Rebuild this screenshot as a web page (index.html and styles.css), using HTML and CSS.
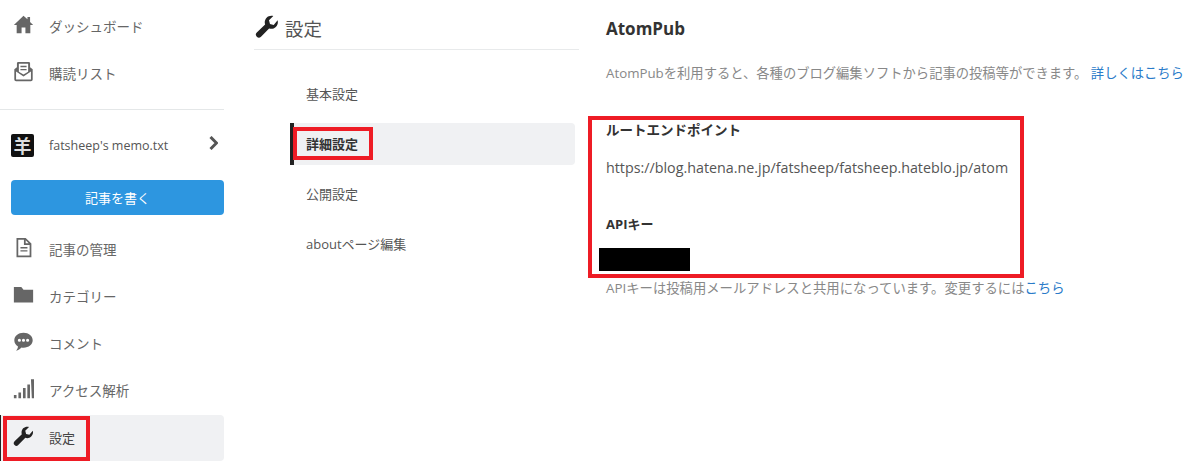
FILE: index.html
```html
<!DOCTYPE html>
<html lang="ja">
<head>
<meta charset="utf-8">
<title>AtomPub 詳細設定</title>
<link rel="stylesheet" href="styles.css">
</head>
<body>
<div class="page">
  <nav class="side">
    <a class="side-item"><svg class="ico" viewBox="0 0 24 24"><path d="M12 2 1 12.500h3.200V22h5.600v-6.500h4.400V22h5.600v-9.500H23L19.500 9V3.500h-3V6z"/></svg><span>ダッシュボード</span></a>
    <a class="side-item"><svg class="ico" viewBox="0 0 24 24"><path fill-rule="evenodd" d="M6 1h12a1.500 1.500 0 0 1 1.500 1.500V7l3 2.500V21a2 2 0 0 1-2 2H3.500a2 2 0 0 1-2-2V9.500l3-2.500V2.500A1.500 1.500 0 0 1 6 1zm.7 2v9.300L12 15.500l5.300-3.200V3zM3.500 12v9h17v-9L12 17.800zM8.500 5.500h7v1.700h-7zm0 3.500h7v1.700h-7z"/></svg><span>購読リスト</span></a>
    <hr class="side-rule">
    <a class="side-item blog"><span class="avatar">羊</span><span class="blog-name">fatsheep's memo.txt</span><svg class="chev" viewBox="0 0 10 14"><path d="M2.500 1 8.500 7l-6 6" fill="none" stroke="currentColor" stroke-width="3"/></svg></a>
    <button class="write">記事を書く</button>
    <a class="side-item"><svg class="ico" viewBox="0 0 24 24"><path fill-rule="evenodd" d="M4 1h10.500L21 7.500V23H4zm2 2v18h13V9h-6.500V3zm8.500.8V7.200h3.400zM8.500 11.500h8v1.600h-8zm0 3.500h8v1.600h-8z"/></svg><span>記事の管理</span></a>
    <a class="side-item"><svg class="ico" viewBox="0 0 24 24"><path d="M1 3.500h8.500L12 6.500h11V21H1z"/></svg><span>カテゴリー</span></a>
    <a class="side-item"><svg class="ico" viewBox="0 0 24 24"><path fill-rule="evenodd" d="M12 2c6 0 10.500 3.700 10.500 8.500S18 19 12 19c-.8 0-1.500 0-2.300-.2C8.200 20.500 6 22 3.500 22.500c1.300-1.500 2-3 2.200-4.800C3 16.100 1.500 13.500 1.500 10.500 1.500 5.700 6 2 12 2zM7.300 8.800a1.800 1.800 0 1 0 0 3.600 1.800 1.800 0 0 0 0-3.600zm4.700 0a1.800 1.800 0 1 0 0 3.600 1.800 1.800 0 0 0 0-3.600zm4.700 0a1.800 1.800 0 1 0 0 3.600 1.800 1.800 0 0 0 0-3.600z"/></svg><span>コメント</span></a>
    <a class="side-item"><svg class="ico" viewBox="0 0 24 24"><path d="M1 19.500h3V23H1zm5.200-3h3V23h-3zm5.200-5h3V23h-3zm5-4h3V23h-3zm4.100-6H24V23h-2.500z"/></svg><span>アクセス解析</span></a>
    <a class="side-item current"><svg class="ico ico-dark" viewBox="0 0 24 24"><path d="M22.600 5.300c.7 2.500 0 5-1.800 6.700-1.800 1.800-4.400 2.300-6.700 1.500L6 21.800a3 3 0 0 1-4.200-.1 3 3 0 0 1 0-4.200l8.300-8.100c-.8-2.300-.2-4.900 1.500-6.700C13.400.9 15.900.3 18.300 1l-4.300 4.300 1 3.700 3.700 1z"/></svg><span>設定</span></a>
    <div class="mark mark-side"></div>
  </nav>

  <section class="mid">
    <h1 class="mid-title"><svg class="ico-title" viewBox="0 0 24 24"><path d="M22.600 5.300c.7 2.500 0 5-1.800 6.700-1.800 1.800-4.400 2.300-6.700 1.500L6 21.800a3 3 0 0 1-4.200-.1 3 3 0 0 1 0-4.200l8.300-8.100c-.8-2.300-.2-4.900 1.500-6.700C13.400.9 15.900.3 18.300 1l-4.300 4.300 1 3.700 3.700 1z"/></svg>設定</h1>
    <ul class="sub">
      <li class="sub-item">基本設定</li>
      <li class="sub-item active">詳細設定<div class="mark mark-sub"></div></li>
      <li class="sub-item">公開設定</li>
      <li class="sub-item">aboutページ編集</li>
    </ul>
  </section>

  <main class="main">
    <h2 class="main-title">AtomPub</h2>
    <p class="desc">AtomPubを利用すると、各種のブログ編集ソフトから記事の投稿等ができます。 <a class="link">詳しくはこちら</a></p>
    <div class="fields">
      <h3 class="label">ルートエンドポイント</h3>
      <p class="url">https://blog.hatena.ne.jp/fatsheep/fatsheep.hateblo.jp/atom</p>
      <h3 class="label label-key">APIキー</h3>
      <div class="redact"></div>
      <div class="mark mark-main"></div>
    </div>
    <p class="note">APIキーは投稿用メールアドレスと共用になっています。変更するには<a class="link">こちら</a></p>
  </main>
</div>
</body>
</html>
```

FILE: styles.css
```css
* { box-sizing: border-box; }
html, body { margin: 0; padding: 0; background: #fff; }
body {
  font-family: "Open Sans", "Noto Sans CJK JP", sans-serif;
  font-size: 13px;
  color: #555;
  overflow: hidden;
}
.page {
  display: flex;
  width: 1200px;
  height: 465px;
}
.side {
  position: relative;
  width: 224px;
  flex: none;
  padding-top: 3px;
}
.side-item {
  display: flex;
  align-items: center;
  height: 47px;
  padding-left: 13px;
  color: #666;
  font-size: 13.500px;
}
.side-item > span:last-child { margin-left: 15px; margin-bottom: 2px; }
.ico { width: 21px; height: 21px; flex: none; fill: #666; margin-top: -4px; }
.ico-dark { fill: #222; }
.side-rule {
  margin: 12px 0 12px;
  border: 0;
  border-top: 1px solid #e4e7e8;
}
.blog { height: 46px; padding-left: 11px; }
.blog .blog-name { margin-left: 15px; font-size: 12.500px; color: #555; }
.avatar {
  width: 23px;
  height: 23px;
  flex: none;
  background: #111;
  color: #ddd;
  border-radius: 2px;
  font: 700 18px/23px "Noto Sans CJK JP", sans-serif;
  text-align: center;
}
.chev { width: 10px; height: 14px; margin-left: 40px; margin-top: -4px; color: #555; }
.write {
  display: block;
  width: 213px;
  height: 35px;
  margin: 12px 0 11px 11px;
  border: 0;
  border-radius: 4px;
  background: #2d96e0;
  color: #fff;
  font-family: inherit;
  font-size: 13px;
}
.current {
  height: 46px;
  margin-top: 1px;
  background: #f0f1f3;
  border-radius: 0 4px 4px 0;
  border-left: 1px solid #222;
  padding-left: 12px;
  color: #444;
  font-size: 13px;
}
.mark {
  position: absolute;
  border: 4px solid #ee1c25;
  pointer-events: none;
}
.mark-side { left: 3px; top: 416px; width: 87px; height: 45px; }

.mid {
  width: 325px;
  flex: none;
  margin-left: 30px;
}
.mid-title {
  display: flex;
  align-items: center;
  height: 50px;
  margin: 0;
  padding: 6px 0 0 1px;
  border-bottom: 1px solid #e8eaeb;
  font-size: 18.500px;
  font-weight: 400;
  color: #555;
}
.ico-title { width: 24px; height: 24px; margin-right: 6px; fill: #222; margin-top: -2px; }
.sub {
  list-style: none;
  margin: 18px 0 0 36px;
  padding: 0;
  width: 285px;
}
.sub-item {
  position: relative;
  display: flex;
  align-items: center;
  height: 50px;
  padding-left: 16px;
  color: #555;
  font-size: 13px;
}
.sub-item.active {
  height: 42px;
  margin: 5px 0 3px;
  padding-left: 12px;
  padding-bottom: 2px;
  border-left: 4px solid #222;
  border-radius: 0 4px 4px 0;
  background: #f0f1f3;
  font-weight: 700;
  color: #333;
}
.mark-sub { left: -1px; top: 4px; width: 80px; height: 33px; }

.main {
  flex: 1;
  margin-left: 27px;
}
.main-title {
  height: 29px;
  margin: 16px 0 0;
  font-size: 17px;
  line-height: 26px;
  font-weight: 700;
  color: #333;
}
.desc {
  margin: 16px 0 0;
  font-size: 13.300px;
  line-height: 24px;
  color: #888;
  white-space: nowrap;
}
.link { color: #2a7bc9; }
.fields {
  position: relative;
  height: 162px;
  margin-top: 32px;
}
.label {
  margin: 0;
  font-size: 13.500px;
  line-height: 26px;
  font-weight: 700;
  color: #333;
}
.url {
  margin: 12px 0 0;
  font-size: 14.300px;
  line-height: 26px;
  color: #555;
  white-space: nowrap;
}
.label-key { margin-top: 30px; font-size: 13px; }
.redact {
  position: absolute;
  left: -7px;
  top: 131px;
  width: 91px;
  height: 23px;
  background: #000;
}
.mark-main { left: -18px; top: -1px; width: 436px; height: 162px; }
.note {
  margin: -3px 0 0;
  font-size: 13.350px;
  line-height: 24px;
  color: #888;
  white-space: nowrap;
}
```
